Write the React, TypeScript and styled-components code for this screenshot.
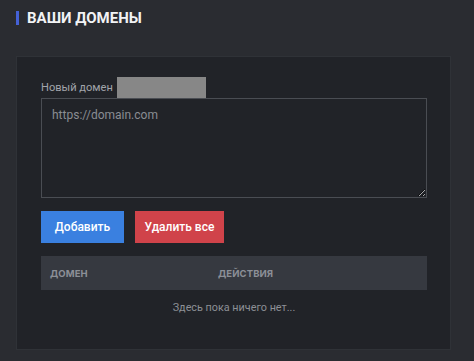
import React from "react";
import styled, { createGlobalStyle } from "styled-components";

const Global = createGlobalStyle`
  html, body { margin: 0; padding: 0; background: #2a2c31; }
  body { font-family: Roboto, "Liberation Sans", Arial, sans-serif; width: 474px; height: 361px; overflow: hidden; }
  * { box-sizing: border-box; }
`;

const Page = styled.div`
  padding: 10px 23px 0 16px;
`;

const Header = styled.div`
  display: flex;
  align-items: center;
  gap: 8px;
  height: 16px;
`;

const Bar = styled.div`
  width: 3px;
  height: 14px;
  background: #4461d6;
`;

const Title = styled.h1`
  margin: 0;
  font-family: Roboto, "Liberation Sans", Arial, sans-serif;
  font-size: 15px;
  font-weight: 700;
  color: #f2f3f5;
`;

const Panel = styled.div`
  margin-top: 30px;
  width: 435px;
  height: 294px;
  background: #212328;
  border: 1px solid #2f3237;
  padding: 20px 24px 0 24px;
  display: flex;
  flex-direction: column;
`;

const LabelRow = styled.div`
  display: flex;
  align-items: flex-end;
  height: 21px;
`;

const Label = styled.label`
  font-size: 11.1px;
  color: #a2a5ab;
  line-height: 14px;
  padding-bottom: 3px;
`;

const Redact = styled.span`
  width: 89px;
  height: 21px;
  margin-left: 4px;
  background: #878787;
`;

const Area = styled.textarea`
  width: 386px;
  height: 100px;
  background: #212328;
  border: 1px solid #4a4d53;
  border-radius: 0;
  padding: 9px 10px;
  color: #d0d2d6;
  font-family: Roboto, "Liberation Sans", Arial, sans-serif;
  font-size: 12px;
  outline: none;
  margin: 0;
  display: block;
  &::placeholder { color: #8a8d93; }
`;

const Buttons = styled.div`
  display: flex;
  gap: 11px;
  margin-top: 13px;
`;

const Btn = styled.button<{ $tone: "blue" | "red"; $w: number }>`
  width: ${(p) => p.$w}px;
  height: 32px;
  border: none;
  border-radius: 0;
  background: ${(p) => (p.$tone === "blue" ? "#3a80e0" : "#d0434a")};
  color: #ffffff;
  font-family: Roboto, sans-serif;
  font-size: 12px;
  font-weight: 500;
  padding: 0;
`;

const TableHead = styled.div`
  margin-top: 13px;
  width: 386px;
  height: 34px;
  background: #363940;
  display: grid;
  grid-template-columns: 168px 1fr;
  align-items: center;
`;

const Th = styled.div`
  padding-left: 9px;
  font-family: Inter, Roboto, sans-serif;
  font-size: 9.5px;
  font-weight: 700;
  color: #8c8f97;
  letter-spacing: 0.1px;
`;

const Empty = styled.div`
  width: 386px;
  text-align: center;
  margin-top: 11px;
  font-size: 10.8px;
  color: #8d9096;
`;

export default function App() {
  return (
    <>
      <Global />
      <Page>
        <Header>
          <Bar />
          <Title>ВАШИ ДОМЕНЫ</Title>
        </Header>
        <Panel>
          <LabelRow>
            <Label>Новый домен</Label>
            <Redact />
          </LabelRow>
          <Area placeholder="https://domain.com" />
          <Buttons>
            <Btn $tone="blue" $w={83}>Добавить</Btn>
            <Btn $tone="red" $w={89}>Удалить все</Btn>
          </Buttons>
          <TableHead>
            <Th>ДОМЕН</Th>
            <Th>ДЕЙСТВИЯ</Th>
          </TableHead>
          <Empty>Здесь пока ничего нет...</Empty>
        </Panel>
      </Page>
    </>
  );
}
